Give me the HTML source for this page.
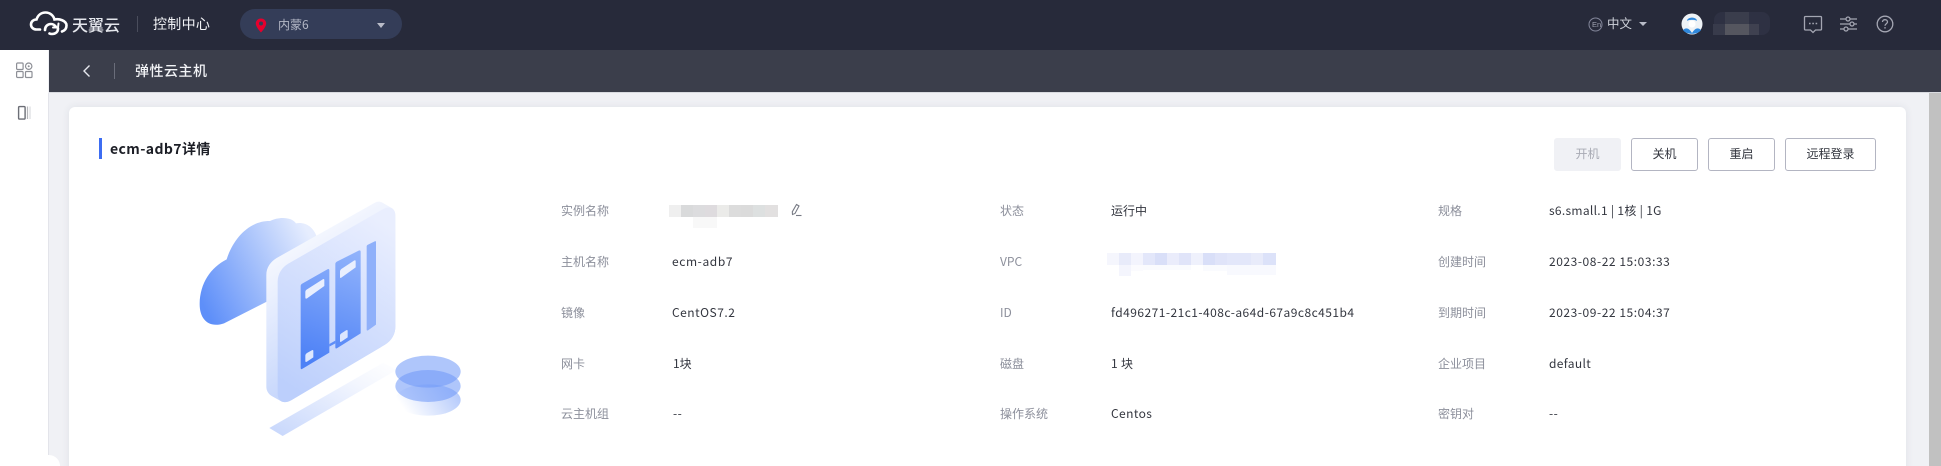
<!DOCTYPE html>
<html><head><meta charset="utf-8"><style>
html,body{margin:0;padding:0;width:1941px;height:466px;overflow:hidden;background:#f0f1f5}
body{position:relative;font-family:"Noto Sans CJK SC","Liberation Sans",sans-serif;font-size:12px}
.a{position:absolute}
.t{position:absolute;white-space:nowrap;line-height:18px;height:18px}
.l{color:#8c8f9b}.v{color:#33363f}
.b{position:absolute;top:138px;height:33px;box-sizing:border-box;border:1px solid #b3b5c2;border-radius:3px;background:#fff;color:#33363f;text-align:center;line-height:30px;font-size:12px}
</style></head><body>
<div class="a" style="left:0;top:0;width:1941px;height:50px;background:#272a3a"></div>
<div class="a" style="left:49px;top:50px;width:1892px;height:42px;background:#3b3e4b"></div>
<div class="a" style="left:49px;top:92px;width:1892px;height:1px;background:#d9dbe0"></div>
<div class="a" style="left:0;top:50px;width:48px;height:416px;background:#fff"></div>
<div class="a" style="left:48px;top:93px;width:1px;height:373px;background:#e3e4ea"></div>
<div class="a" style="left:1929px;top:93px;width:12px;height:373px;background:#c1c1c1"></div>
<div class="a" style="left:69px;top:107px;width:1837px;height:380px;background:#fff;border-radius:6px;box-shadow:0 0 8px rgba(60,65,90,.09)"></div>
<div class="a" style="left:48px;top:455px;width:12px;height:11px;background:#fff;border-radius:0 12px 0 0"></div>

<!-- logo -->
<svg class="a" style="left:28px;top:8px" width="44" height="28" viewBox="0 0 44 28" fill="none" stroke="#fff" stroke-width="2.6" stroke-linecap="round">
<path d="M12 21.500H8.500C5 21.500 3 19 3 16.500 3 13.500 5.500 11.500 8.500 11.500 10 7 13.500 4.500 17.500 4.500 22 4.500 25.500 7.500 26.500 11.500 31 10.500 38.500 12.500 38.500 17.500 38.500 20.500 37 22.500 34 23.500"/>
<path d="M17 22C17 18.500 19.500 16 23 16 25.500 16 27 17.500 28 19"/><path d="M30 20.500C30 24 27.500 26 24 26 23 26 22 25.800 21.500 25.500"/>
<path d="M25 19.500H30L30.500 15.500" stroke-width="2"/>
</svg>
<div class="t" style="left:72px;top:13px;color:#e4e6ec;font-size:16px;line-height:22px;height:22px;font-weight:500">天翼云</div>
<div class="a" style="left:137px;top:16px;width:1px;height:16px;background:#4a4d5c"></div>
<div class="t" style="left:153px;top:14px;color:#f2f3f6;font-size:14px;line-height:20px;height:20px;letter-spacing:.3px">控制中心</div>
<div class="a" style="left:240px;top:9px;width:162px;height:30px;border-radius:15px;background:#343d58"></div>
<svg class="a" style="left:255px;top:18px" width="12" height="15" viewBox="0 0 12 15"><path fill-rule="evenodd" fill="#e5002d" d="M6 .5C2.900.5.800 2.900.800 5.500.800 9 6 14.500 6 14.500S11.200 9 11.200 5.500C11.200 2.900 9.100.5 6 .5ZM6 3.500A2 2 0 1 1 6 7.500 2 2 0 0 1 6 3.500Z"/></svg>
<div class="t" style="left:278px;top:16px;color:#b4b8c6">内蒙6</div>
<div class="a" style="left:377px;top:23px;width:0;height:0;border:4px solid transparent;border-top:5px solid #b9bcc8;border-bottom:0"></div>

<!-- right header -->
<svg class="a" style="left:1588px;top:17px" width="15" height="15" viewBox="0 0 15 15"><circle cx="7.500" cy="7.500" r="6.500" fill="none" stroke="#83869a" stroke-width="1"/></svg>
<div class="t" style="left:1592px;top:18px;font-size:7.500px;line-height:13px;height:13px;color:#9ea1b0;font-family:'Liberation Sans',sans-serif">En</div>
<div class="t" style="left:1607px;top:14px;color:#cfd2db;font-size:12.500px;line-height:18px">中文</div>
<div class="a" style="left:1639px;top:22px;width:0;height:0;border:4px solid transparent;border-top:4.500px solid #b9bcc8;border-bottom:0"></div>
<svg class="a" style="left:1681px;top:13px" width="22" height="22" viewBox="0 0 22 22"><circle cx="11" cy="11" r="10.500" fill="#eef2f6"/><path d="M2 17C5 14 8 15 11 20 14 15 17 14 20 17 17 22 5 22 2 17Z" fill="#2f88dc"/><path d="M6 8C6 3.500 16 3.500 16 8 15 6.500 7 6.500 6 8Z" fill="#2f88dc"/><circle cx="11" cy="11" r="3.500" fill="#fff"/></svg>
<div class="a" style="left:1714px;top:12px;width:56px;height:23px;border-radius:8px;background:#2e3143"></div>
<div class="a" style="left:1725px;top:12px;width:24px;height:12px;background:#3a3d4c"></div>
<div class="a" style="left:1725px;top:24px;width:24px;height:11px;background:#55565f"></div>
<div class="a" style="left:1713px;top:24px;width:12px;height:11px;background:#383b4b"></div>
<div class="a" style="left:1749px;top:24px;width:10px;height:11px;background:#3f4150"></div>
<svg class="a" style="left:1803px;top:14px" width="92" height="22" viewBox="0 0 92 22" fill="none" stroke="#a4a6b2" stroke-width="1.300">
<path d="M2.500 2.500H17.500Q18.500 2.500 18.500 3.500V15Q18.500 16 17.500 16H12.500L10 18.500 7.500 16H2.500Q1.500 16 1.500 15V3.500Q1.500 2.500 2.500 2.500Z"/>
<path d="M6 9.500h1.600M9.300 9.500h1.600M12.600 9.500h1.600" stroke-width="1.500"/>
<path d="M37 5H43M47 5H54M37 10H47M51 10H54M37 15H41M45 15H54"/>
<circle cx="45" cy="5" r="2"/><circle cx="49" cy="10" r="2"/><circle cx="43" cy="15" r="2"/>
<circle cx="82" cy="10" r="7.800"/><path d="M79.500 8C79.500 6.500 80.700 5.700 82 5.700 83.500 5.700 84.500 6.700 84.500 8 84.500 9.700 82 9.800 82 11.800"/><path d="M82 13.200v1.300" stroke-width="1.500"/>
</svg>

<!-- sidebar icons -->
<svg class="a" style="left:15px;top:61px" width="19" height="18" viewBox="0 0 19 18" fill="none" stroke="#8d8f96" stroke-width="1.200"><rect x="1.600" y="2" width="6.500" height="6.500" rx="1"/><rect x="1.600" y="10.500" width="6.500" height="6" rx="1"/><rect x="10.500" y="10.500" width="6.500" height="6" rx="1"/><circle cx="13.700" cy="5.200" r="3.200"/><circle cx="13.700" cy="5.200" r="1" fill="#8d8f96" stroke="none"/></svg>
<svg class="a" style="left:17px;top:105px" width="16" height="16" viewBox="0 0 16 16" fill="none"><rect x="1.600" y="1.600" width="6.500" height="12.500" rx="1" stroke="#6c6e76" stroke-width="1.400"/><path d="M10.500 1.500V14" stroke="#b5b6ba" stroke-width="1.200"/><path d="M13 1.500V14" stroke="#dadbde" stroke-width="1.200"/></svg>

<!-- subheader -->
<svg class="a" style="left:82px;top:64px" width="10" height="14" viewBox="0 0 10 14" fill="none" stroke="#e6e8ee" stroke-width="1.400"><path d="M7.500 1.500 2 7l5.500 5.500"/></svg>
<div class="a" style="left:114px;top:63px;width:1px;height:16px;background:#6a6d7a"></div>
<div class="t" style="left:135px;top:61px;color:#f2f3f6;font-size:14px;line-height:20px;height:20px;font-weight:500;letter-spacing:.5px">弹性云主机</div>

<!-- title -->
<div class="a" style="left:99px;top:138px;width:3px;height:21px;background:#3d6df2"></div>
<div class="t" style="left:110px;top:139px;color:#1c1e26;font-size:14px;line-height:20px;height:20px;font-weight:700;letter-spacing:.4px">ecm-adb7详情</div>

<!-- buttons -->
<div class="b" style="left:1554px;width:67px;background:#f0f1f5;border-color:#f0f1f5;color:#a8aab4">开机</div>
<div class="b" style="left:1631px;width:67px">关机</div>
<div class="b" style="left:1708px;width:67px">重启</div>
<div class="b" style="left:1785px;width:91px">远程登录</div>

<!-- illustration -->
<svg class="a" style="left:170px;top:180px" width="330" height="286" viewBox="0 0 990 858">
<defs>
<linearGradient id="c" x1="0" y1=".75" x2="1" y2=".3"><stop offset="0" stop-color="#5e8ff9"/><stop offset=".55" stop-color="#a9c3fb"/><stop offset="1" stop-color="#e6edfe"/></linearGradient>
<linearGradient id="e" x1=".1" y1=".1" x2=".45" y2="1"><stop offset="0" stop-color="#fdfdff"/><stop offset=".35" stop-color="#e9effe"/><stop offset="1" stop-color="#bdd0fb"/></linearGradient>
<linearGradient id="f" x1=".7" y1="0" x2=".3" y2="1"><stop offset="0" stop-color="#e9eefe"/><stop offset="1" stop-color="#bccffc"/></linearGradient>
<linearGradient id="s" gradientUnits="userSpaceOnUse" x1="430" y1="550" x2="560" y2="220"><stop offset="0" stop-color="#4d81f6"/><stop offset="1" stop-color="#90b2fb"/></linearGradient>
<linearGradient id="r" x1="0" y1="1" x2="1" y2="0"><stop offset="0" stop-color="#c6d6fc"/><stop offset=".7" stop-color="#f3f6fe"/><stop offset="1" stop-color="#fff"/></linearGradient>
<linearGradient id="d" x1="1" y1=".4" x2=".1" y2=".7"><stop offset="0" stop-color="#b5cafb"/><stop offset="1" stop-color="#fff"/></linearGradient>
</defs>
<path fill="url(#c)" d="M162 430C118 445 88 420 89 370 90 310 122 262 170 238 188 180 235 122 300 123 325 110 365 110 378 130 405 125 430 140 440 170L300 360 162 430Z"/>
<path fill="url(#e)" d="M615 68C622 64 630 64 637 68L665 84C672 88 676 96 676 106V440C676 462 665 482 645 494L365 660C352 668 340 668 330 662L305 648C295 642 289 632 289 620V285C289 262 302 245 320 234L615 68Z"/>
<path fill="url(#f)" d="M640 87C660 76 676 86 676 106V440C676 462 665 482 645 494L365 660C340 674 323 664 323 640V305C323 282 336 262 355 251L640 87Z"/>
<path fill="url(#s)" d="M398 310 472 268Q478 265 478 272V518L398 566Q392 570 392 564V318Q392 313 398 310Z"/>
<path fill="url(#s)" d="M502 244 566 212Q572 209 572 215V460L502 504Q496 508 496 502V252Q496 247 502 244Z"/>
<path fill="#5f8ef7" d="M478 492 496 482V490L478 500Z"/>
<path fill="#8fb0fa" d="M592 195 614 184Q618 182 618 186V434L594 451Q590 453 590 449V198Z"/>
<path fill="#e9effe" d="M411 328 458 298Q463 295 463 300V318L411 355Q406 358 406 352V336Q406 331 411 328Z"/>
<path fill="#e9effe" d="M514 267 552 242Q557 239 557 244V262L514 293Q510 296 510 291V274Q510 270 514 267Z"/>
<path fill="#dde7fe" d="M411 519 425 511Q430 508 430 513V532L411 545Q406 548 406 543V526Q406 522 411 519Z"/>
<path fill="#dde7fe" d="M514 460 528 451Q533 448 533 453V472L514 485Q510 488 510 483V466Q510 462 514 460Z"/>
<path fill="url(#r)" d="M298 744 640 548 680 570 338 768Z"/>
<ellipse cx="774" cy="660" rx="98" ry="47" fill="url(#d)"/>
<ellipse cx="774" cy="618" rx="98" ry="48" fill="#6d97f7" fill-opacity=".55"/>
<ellipse cx="774" cy="575" rx="98" ry="48" fill="#6d97f7" fill-opacity=".55"/>
</svg>

<!-- labels -->
<div class="t l" style="left:561px;top:202px">实例名称</div>
<div class="t l" style="left:561px;top:253px">主机名称</div>
<div class="t l" style="left:561px;top:304px">镜像</div>
<div class="t l" style="left:561px;top:355px">网卡</div>
<div class="t l" style="left:561px;top:405px">云主机组</div>
<div class="t v" style="left:672px;top:253px;letter-spacing:.6px">ecm-adb7</div>
<div class="t v" style="left:672px;top:304px;letter-spacing:.5px">CentOS7.2</div>
<div class="t v" style="left:673px;top:355px">1块</div>
<div class="t v" style="left:673px;top:405px;letter-spacing:.5px">--</div>
<div class="t l" style="left:1000px;top:202px">状态</div>
<div class="t l" style="left:1000px;top:253px">VPC</div>
<div class="t l" style="left:1000px;top:304px">ID</div>
<div class="t l" style="left:1000px;top:355px">磁盘</div>
<div class="t l" style="left:1000px;top:405px">操作系统</div>
<div class="t v" style="left:1111px;top:202px">运行中</div>
<div class="t v" style="left:1111px;top:304px;letter-spacing:.46px">fd496271-21c1-408c-a64d-67a9c8c451b4</div>
<div class="t v" style="left:1111px;top:355px;letter-spacing:.3px">1 块</div>
<div class="t v" style="left:1111px;top:405px;letter-spacing:.4px">Centos</div>
<div class="t l" style="left:1438px;top:202px">规格</div>
<div class="t l" style="left:1438px;top:253px">创建时间</div>
<div class="t l" style="left:1438px;top:304px">到期时间</div>
<div class="t l" style="left:1438px;top:355px">企业项目</div>
<div class="t l" style="left:1438px;top:405px">密钥对</div>
<div class="t v" style="left:1549px;top:202px;letter-spacing:.3px">s6.small.1 | 1核 | 1G</div>
<div class="t v" style="left:1549px;top:253px;letter-spacing:.55px">2023-08-22 15:03:33</div>
<div class="t v" style="left:1549px;top:304px;letter-spacing:.55px">2023-09-22 15:04:37</div>
<div class="t v" style="left:1549px;top:355px;letter-spacing:.35px">default</div>
<div class="t v" style="left:1549px;top:405px;letter-spacing:.5px">--</div>

<!-- blurred name -->
<svg class="a" style="left:669px;top:204px" width="110" height="26" viewBox="0 0 110 26" shape-rendering="crispEdges">
<rect x="0" y="1" width="12" height="12" fill="#efefef"/><rect x="12" y="1" width="12" height="12" fill="#d9dadb"/><rect x="24" y="1" width="12" height="12" fill="#dcdcde"/><rect x="36" y="1" width="12" height="12" fill="#dedbde"/><rect x="48" y="1" width="12" height="12" fill="#ebebe9"/><rect x="60" y="1" width="12" height="12" fill="#dcdcdc"/><rect x="72" y="1" width="12" height="12" fill="#dbdbdb"/><rect x="84" y="1" width="12" height="12" fill="#dde0e0"/><rect x="96" y="1" width="13" height="12" fill="#e2e0e0"/>
<rect x="24" y="13" width="24" height="11" fill="#f8f8f8"/>
</svg>
<svg class="a" style="left:789px;top:203px" width="14" height="14" viewBox="0 0 14 14" fill="none" stroke="#777a84" stroke-width="1.100"><path d="M7.500 1.500 10 3 6 10.500 3.500 11.500 3.300 8.800Z"/><path d="M7 12.500H12.500"/></svg>
<!-- blurred VPC -->
<svg class="a" style="left:1107px;top:252px" width="170" height="26" viewBox="0 0 170 26" shape-rendering="crispEdges">
<rect x="0" y="1" width="12" height="12" fill="#f5f6fd"/><rect x="12" y="1" width="12" height="12" fill="#e8ebfa"/><rect x="24" y="1" width="12" height="12" fill="#f3f4fd"/><rect x="36" y="1" width="12" height="12" fill="#e3e7fa"/><rect x="48" y="1" width="12" height="12" fill="#d9dff8"/><rect x="60" y="1" width="12" height="12" fill="#eaecfb"/><rect x="72" y="1" width="12" height="12" fill="#e0e4f9"/><rect x="84" y="1" width="12" height="12" fill="#eff1fc"/><rect x="96" y="1" width="12" height="12" fill="#d9dff8"/><rect x="108" y="1" width="12" height="12" fill="#e0e4f9"/><rect x="120" y="1" width="12" height="12" fill="#e3e7fa"/><rect x="132" y="1" width="12" height="12" fill="#e3e7fa"/><rect x="144" y="1" width="12" height="12" fill="#e8ebfa"/><rect x="156" y="1" width="13" height="12" fill="#dce2f9"/>
<rect x="12" y="13" width="12" height="11" fill="#f4f5fd"/><rect x="24" y="13" width="12" height="6" fill="#fbfbfe"/><rect x="36" y="13" width="48" height="5" fill="#fafbfe"/><rect x="96" y="13" width="30" height="6" fill="#fafbfe"/><rect x="120" y="13" width="49" height="10" fill="#f8f9fe"/>
</svg>
</body></html>
